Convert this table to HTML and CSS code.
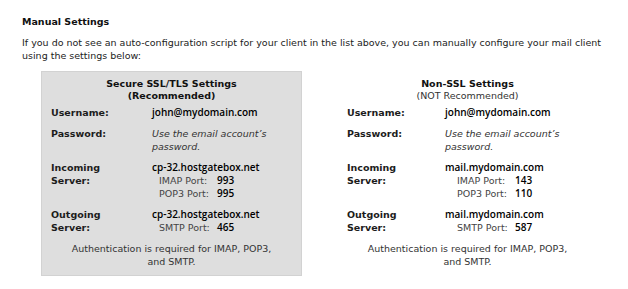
FILE: index.html
```html
<!DOCTYPE html>
<html lang="en">
<head>
  <meta charset="UTF-8" />
  <title>Manual Settings</title>
  <link rel="stylesheet" href="styles.css">
</head>
<body>
  <div class="page">
    <h2 class="page-title">Manual Settings</h2>
    <p class="intro">If you do not see an auto-configuration script for your client in the list above, you can manually configure your mail client using the settings below:</p>

    <div class="settings">
      <div class="settings-col secure">
        <div class="col-title">
          <strong>Secure SSL/TLS Settings</strong>
          <strong>(Recommended)</strong>
        </div>
        <div class="rows">
          <div class="row">
            <div class="label">Username:</div>
            <div class="value">john@mydomain.com</div>
          </div>
          <div class="row">
            <div class="label">Password:</div>
            <div class="hint">Use the email account’s password.</div>
          </div>
          <div class="row">
            <div class="label">Incoming<br>Server:</div>
            <div>
              <div class="value">cp-32.hostgatebox.net</div>
              <div class="port"><span>IMAP Port:</span><b>993</b></div>
              <div class="port"><span>POP3 Port:</span><b>995</b></div>
            </div>
          </div>
          <div class="row">
            <div class="label">Outgoing<br>Server:</div>
            <div>
              <div class="value">cp-32.hostgatebox.net</div>
              <div class="port"><span>SMTP Port:</span><b>465</b></div>
            </div>
          </div>
          <div class="note">Authentication is required for IMAP, POP3,<br>and SMTP.</div>
        </div>
      </div>

      <div class="settings-col plain">
        <div class="col-title">
          <strong>Non-SSL Settings</strong>
          <span>(NOT Recommended)</span>
        </div>
        <div class="rows">
          <div class="row">
            <div class="label">Username:</div>
            <div class="value">john@mydomain.com</div>
          </div>
          <div class="row">
            <div class="label">Password:</div>
            <div class="hint">Use the email account’s password.</div>
          </div>
          <div class="row">
            <div class="label">Incoming<br>Server:</div>
            <div>
              <div class="value">mail.mydomain.com</div>
              <div class="port"><span>IMAP Port:</span><b>143</b></div>
              <div class="port"><span>POP3 Port:</span><b>110</b></div>
            </div>
          </div>
          <div class="row">
            <div class="label">Outgoing<br>Server:</div>
            <div>
              <div class="value">mail.mydomain.com</div>
              <div class="port"><span>SMTP Port:</span><b>587</b></div>
            </div>
          </div>
          <div class="note">Authentication is required for IMAP, POP3,<br>and SMTP.</div>
        </div>
      </div>
    </div>
  </div>
</body>
</html>
```

FILE: styles.css
```css
* {
  margin: 0;
  padding: 0;
  box-sizing: border-box;
}

body {
  font-family: 'DejaVu Sans', Verdana, sans-serif;
  font-size: 9.5px;
  line-height: 13px;
  color: #1a1a1a;
  background: #ffffff;
}

.page {
  padding: 15px 22px;
}

.page-title {
  font-size: 9.5px;
  font-weight: bold;
  line-height: 13px;
  color: #111;
}

.intro {
  margin-top: 8px;
  width: 590px;
  color: #222;
}

.settings {
  display: flex;
  gap: 35px;
  margin-top: 9px;
  margin-left: 19px;
}

.settings-col {
  width: 261px;
  padding: 6px 9px 7px;
  border: 1px solid transparent;
}

.secure {
  background: #dedede;
  border-color: #d2d2d2;
}

.col-title {
  display: flex;
  flex-direction: column;
  align-items: center;
  line-height: 12px;
  color: #111;
}

.col-title span {
  color: #333;
}

.rows {
  display: flex;
  flex-direction: column;
  gap: 8px;
  margin-top: 4px;
}

.row {
  display: grid;
  grid-template-columns: 101px 1fr;
}

.plain .row {
  grid-template-columns: 98px 1fr;
}

.label {
  font-weight: bold;
  color: #1c1c1c;
}

.value {
  font-family: 'Open Sans', 'Liberation Sans', sans-serif;
  font-size: 10px;
  font-weight: 600;
  color: #000;
}

.hint {
  font-style: italic;
  color: #333;
  width: 120px;
}

.port {
  display: flex;
  padding-left: 7px;
  color: #444;
}

.plain .port {
  padding-left: 12px;
}

.port span {
  width: 58px;
}

.port b {
  font-family: 'Open Sans', 'Liberation Sans', sans-serif;
  font-size: 10px;
  font-weight: 600;
  color: #000;
}

.note {
  text-align: center;
  color: #333;
}
```
